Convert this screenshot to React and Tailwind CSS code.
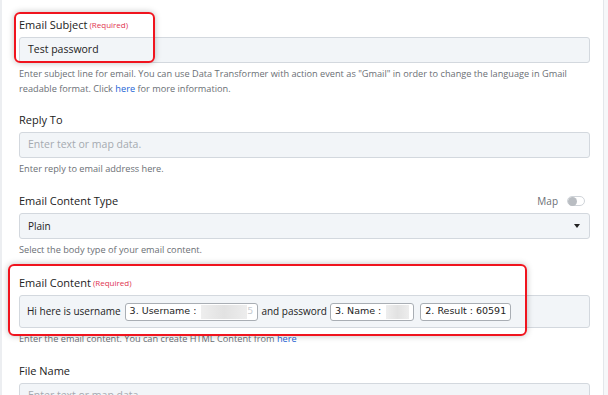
const font = { fontFamily: '"Open Sans", "Noto Sans", sans-serif' };

function Label({ children, required = false }) {
  return (
    <div className="flex h-4 items-center text-[11px] leading-4 text-[#222]">
      <span>{children}</span>
      {required && <span className="ml-[2px] text-[8px] text-[#e0344f]">(Required)</span>}
    </div>
  );
}

function Help({ children }) {
  return <p className="mt-[3px] text-[9.2px] leading-[15px] text-[#6b6f75]">{children}</p>;
}

function TextInput({ value, placeholder }) {
  return (
    <div className="mt-1 flex h-[26px] items-center rounded-[3px] border border-[#d3d8de] bg-[#f2f5f8] px-2 text-[10.5px]">
      {value ? (
        <span className="text-[#222]">{value}</span>
      ) : (
        <span className="text-[#a5aab0]">{placeholder}</span>
      )}
    </div>
  );
}

function Chip({ label, value, blurWidth = 0, trail = '' }) {
  return (
    <span
      className="mx-[3px] inline-flex h-[18px] items-center rounded-[3px] border border-[#a9aeb4] bg-white px-1 text-[#222]"
      style={{ fontFamily: '"DejaVu Sans", sans-serif', fontSize: '9.5px' }}
    >
      <span className="whitespace-pre">{label}</span>
      {blurWidth > 0 && (
        <span
          className="ml-[5px] inline-block h-[14px] bg-gradient-to-r from-[#eeeeee] via-[#e2e2e2] to-[#ededed] blur-[0.5px]"
          style={{ width: blurWidth }}
        />
      )}
      {value && <span>{value}</span>}
      {trail && <span className="text-[#c8cdd2]">{trail}</span>}
    </span>
  );
}

export default function App() {
  return (
    <div className="relative flex h-[395px] w-[608px] overflow-hidden bg-white" style={font}>
      <div className="w-[2px] shrink-0 bg-[#eceef1]" />
      <main className="flex w-[602px] flex-col border-r border-[#e3e6ea] pl-[17px] pr-[13px] pt-[17px]">
        {/* Email subject */}
        <section>
          <Label required>Email Subject</Label>
          <TextInput value="Test password" />
          <Help>
            Enter subject line for email. You can use Data Transformer with action event as "Gmail" in order to change the language in Gmail readable format. Click{' '}
            <span className="text-[#2463d6]">here</span> for more information.
          </Help>
        </section>

        {/* Reply to */}
        <section className="mt-4">
          <Label>Reply To</Label>
          <TextInput placeholder="Enter text or map data." />
          <Help>Enter reply to email address here.</Help>
        </section>

        {/* Content type */}
        <section className="mt-[17px]">
          <div className="flex items-center justify-between">
            <Label>Email Content Type</Label>
            <div className="mr-[5px] flex items-center gap-[9px] text-[10px] text-[#6b6f75]">
              <span>Map</span>
              <span className="flex h-[10px] w-[18px] items-center rounded-full border border-[#d0d4d9] bg-white">
                <span className="h-[9px] w-[9px] rounded-full bg-[#b9bdc2]" />
              </span>
            </div>
          </div>
          <div className="mt-1 flex h-[26px] items-center justify-between rounded-[3px] border border-[#d3d8de] bg-[#f2f5f8] pl-2 pr-[9px] text-[10px] text-[#222]">
            <span>Plain</span>
            <span className="h-0 w-0 border-x-[3.5px] border-t-[4px] border-x-transparent border-t-[#222]" />
          </div>
          <Help>Select the body type of your email content.</Help>
        </section>

        {/* Email content */}
        <section className="mt-[18px]">
          <Label required>Email Content</Label>
          <div className="mt-1 flex h-[33px] items-center rounded-[3px] border border-[#d3d8de] bg-[#f2f5f8] pl-[7px] pr-2 text-[10px] text-[#222]">
            <span className="mr-[1px]">Hi here is username</span>
            <Chip label="3. Username :" blurWidth={46} trail="5" />
            <span>and password</span>
            <Chip label="3. Name :" blurWidth={23} />
            <Chip label="2. Result : 60591" />
          </div>
          <Help>
            Enter the email content. You can create HTML Content from <span className="text-[#2463d6]">here</span>
          </Help>
        </section>

        {/* File name */}
        <section className="mt-[17px]">
          <Label>File Name</Label>
          <TextInput placeholder="Enter text or map data." />
        </section>
      </main>
      <div className="flex-1 bg-[#f6f7f9]" />

      {/* Annotation outlines */}
      <div className="pointer-events-none absolute left-[14px] top-[12px] h-[51px] w-[141px] rounded-[6px] border-2 border-[#f0141e] shadow-[0_0_6px_rgba(0,0,0,0.25)]" />
      <div className="pointer-events-none absolute left-[8px] top-[264px] h-[72px] w-[519px] rounded-[6px] border-2 border-[#f0141e] shadow-[0_0_6px_rgba(0,0,0,0.25)]" />
    </div>
  );
}
